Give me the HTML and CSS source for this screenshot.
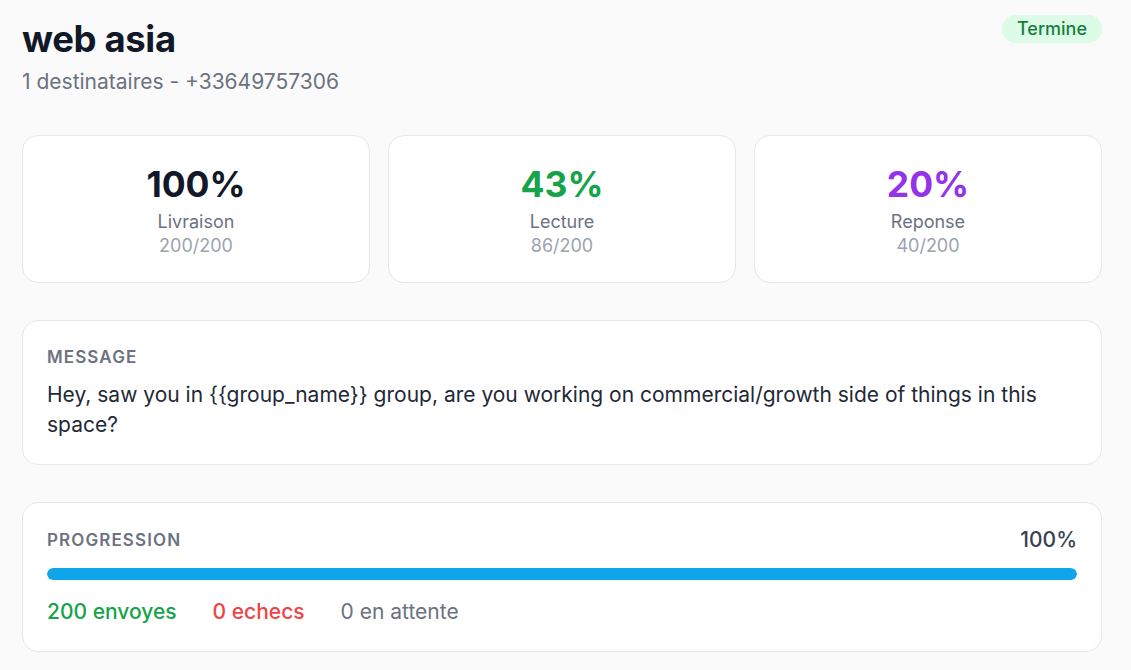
FILE: index.html
```html
<!DOCTYPE html>
<html lang="fr">
<head>
    <meta charset="UTF-8">
    <meta name="viewport" content="width=device-width, initial-scale=1.0">
    <title>web asia - Campagne</title>
    <link rel="stylesheet" href="styles.css">
</head>
<body>
    <div class="page">
        <header class="campaign-header">
            <div>
                <h1>web asia</h1>
                <p class="subtitle">1 destinataires - +33649757306</p>
            </div>
            <span class="badge">Termine</span>
        </header>

        <div class="stats">
            <div class="card stat">
                <div class="stat-value">100%</div>
                <div class="stat-label">Livraison</div>
                <div class="stat-count">200/200</div>
            </div>
            <div class="card stat">
                <div class="stat-value green">43%</div>
                <div class="stat-label">Lecture</div>
                <div class="stat-count">86/200</div>
            </div>
            <div class="card stat">
                <div class="stat-value purple">20%</div>
                <div class="stat-label">Reponse</div>
                <div class="stat-count">40/200</div>
            </div>
        </div>

        <div class="card section">
            <h3 class="section-title">Message</h3>
            <p class="message-text">Hey, saw you in {{group_name}} group, are you working on commercial/growth side of things in this space?</p>
        </div>

        <div class="card section">
            <div class="progress-head">
                <h3 class="section-title">Progression</h3>
                <span class="progress-percent">100%</span>
            </div>
            <div class="progress-track">
                <div class="progress-fill" style="width: 100%"></div>
            </div>
            <div class="progress-counts">
                <span class="green">200 envoyes</span>
                <span class="red">0 echecs</span>
                <span class="muted">0 en attente</span>
            </div>
        </div>
    </div>
</body>
</html>
```

FILE: styles.css
```css
body, html {
    margin: 0;
    padding: 0;
    font-family: Inter, "Noto Sans", sans-serif;
    background-color: #fafafa;
    color: #111827;
}

.page {
    width: 1080px;
    padding: 15px 0 0 22px;
}

.campaign-header {
    display: flex;
    justify-content: space-between;
    align-items: flex-start;
}

.campaign-header h1 {
    margin: 0;
    font-size: 36.5px;
    line-height: 48px;
    font-weight: 700;
    color: #111827;
    letter-spacing: -0.01em;
}

.subtitle {
    margin: 5px 0 0;
    font-size: 21px;
    line-height: 28px;
    color: #6b7280;
}

.badge {
    margin-top: 0;
    background-color: #dcfce7;
    color: #15803d;
    font-size: 18px;
    font-weight: 500;
    line-height: 28px;
    padding: 0 15px;
    border-radius: 999px;
}

.card {
    background-color: white;
    border: 1px solid #e5e7eb;
    border-radius: 16px;
    box-sizing: border-box;
}

.stats {
    display: grid;
    grid-template-columns: repeat(3, 1fr);
    gap: 18px;
    margin-top: 39px;
}

.stat {
    height: 148px;
    display: flex;
    flex-direction: column;
    align-items: center;
    justify-content: center;
    padding-top: 2px;
}

.stat-value {
    font-size: 35.5px;
    font-weight: 700;
    line-height: 44px;
    color: #111827;
}

.stat-label {
    font-size: 18px;
    line-height: 24px;
    color: #6b7280;
    margin-top: 3px;
}

.stat-count {
    font-size: 18px;
    line-height: 24px;
    color: #9ca3af;
}

.green {
    color: #16a34a;
}

.purple {
    color: #9333ea;
}

.red {
    color: #ef4444;
}

.muted {
    color: #6b7280;
}

.section {
    margin-top: 37px;
    padding: 24px;
}

.section-title {
    margin: 0;
    font-size: 17px;
    line-height: 24px;
    font-weight: 600;
    text-transform: uppercase;
    letter-spacing: 0.065em;
    color: #6b7280;
}

.message-text {
    margin: 11px 0 0;
    font-size: 21px;
    line-height: 30px;
    color: #1f2937;
}

.progress-head {
    display: flex;
    justify-content: space-between;
    align-items: center;
}

.progress-percent {
    font-size: 21px;
    font-weight: 500;
    color: #374151;
}

.progress-track {
    margin-top: 16px;
    height: 12px;
    background-color: #e5e7eb;
    border-radius: 6px;
    overflow: hidden;
}

.progress-fill {
    height: 100%;
    background-color: #0ea5e9;
    border-radius: 6px;
}

.progress-counts {
    display: flex;
    gap: 36px;
    margin-top: 17px;
    font-size: 21px;
    line-height: 30px;
}

.progress-counts .green,
.progress-counts .red {
    font-weight: 500;
}
```
